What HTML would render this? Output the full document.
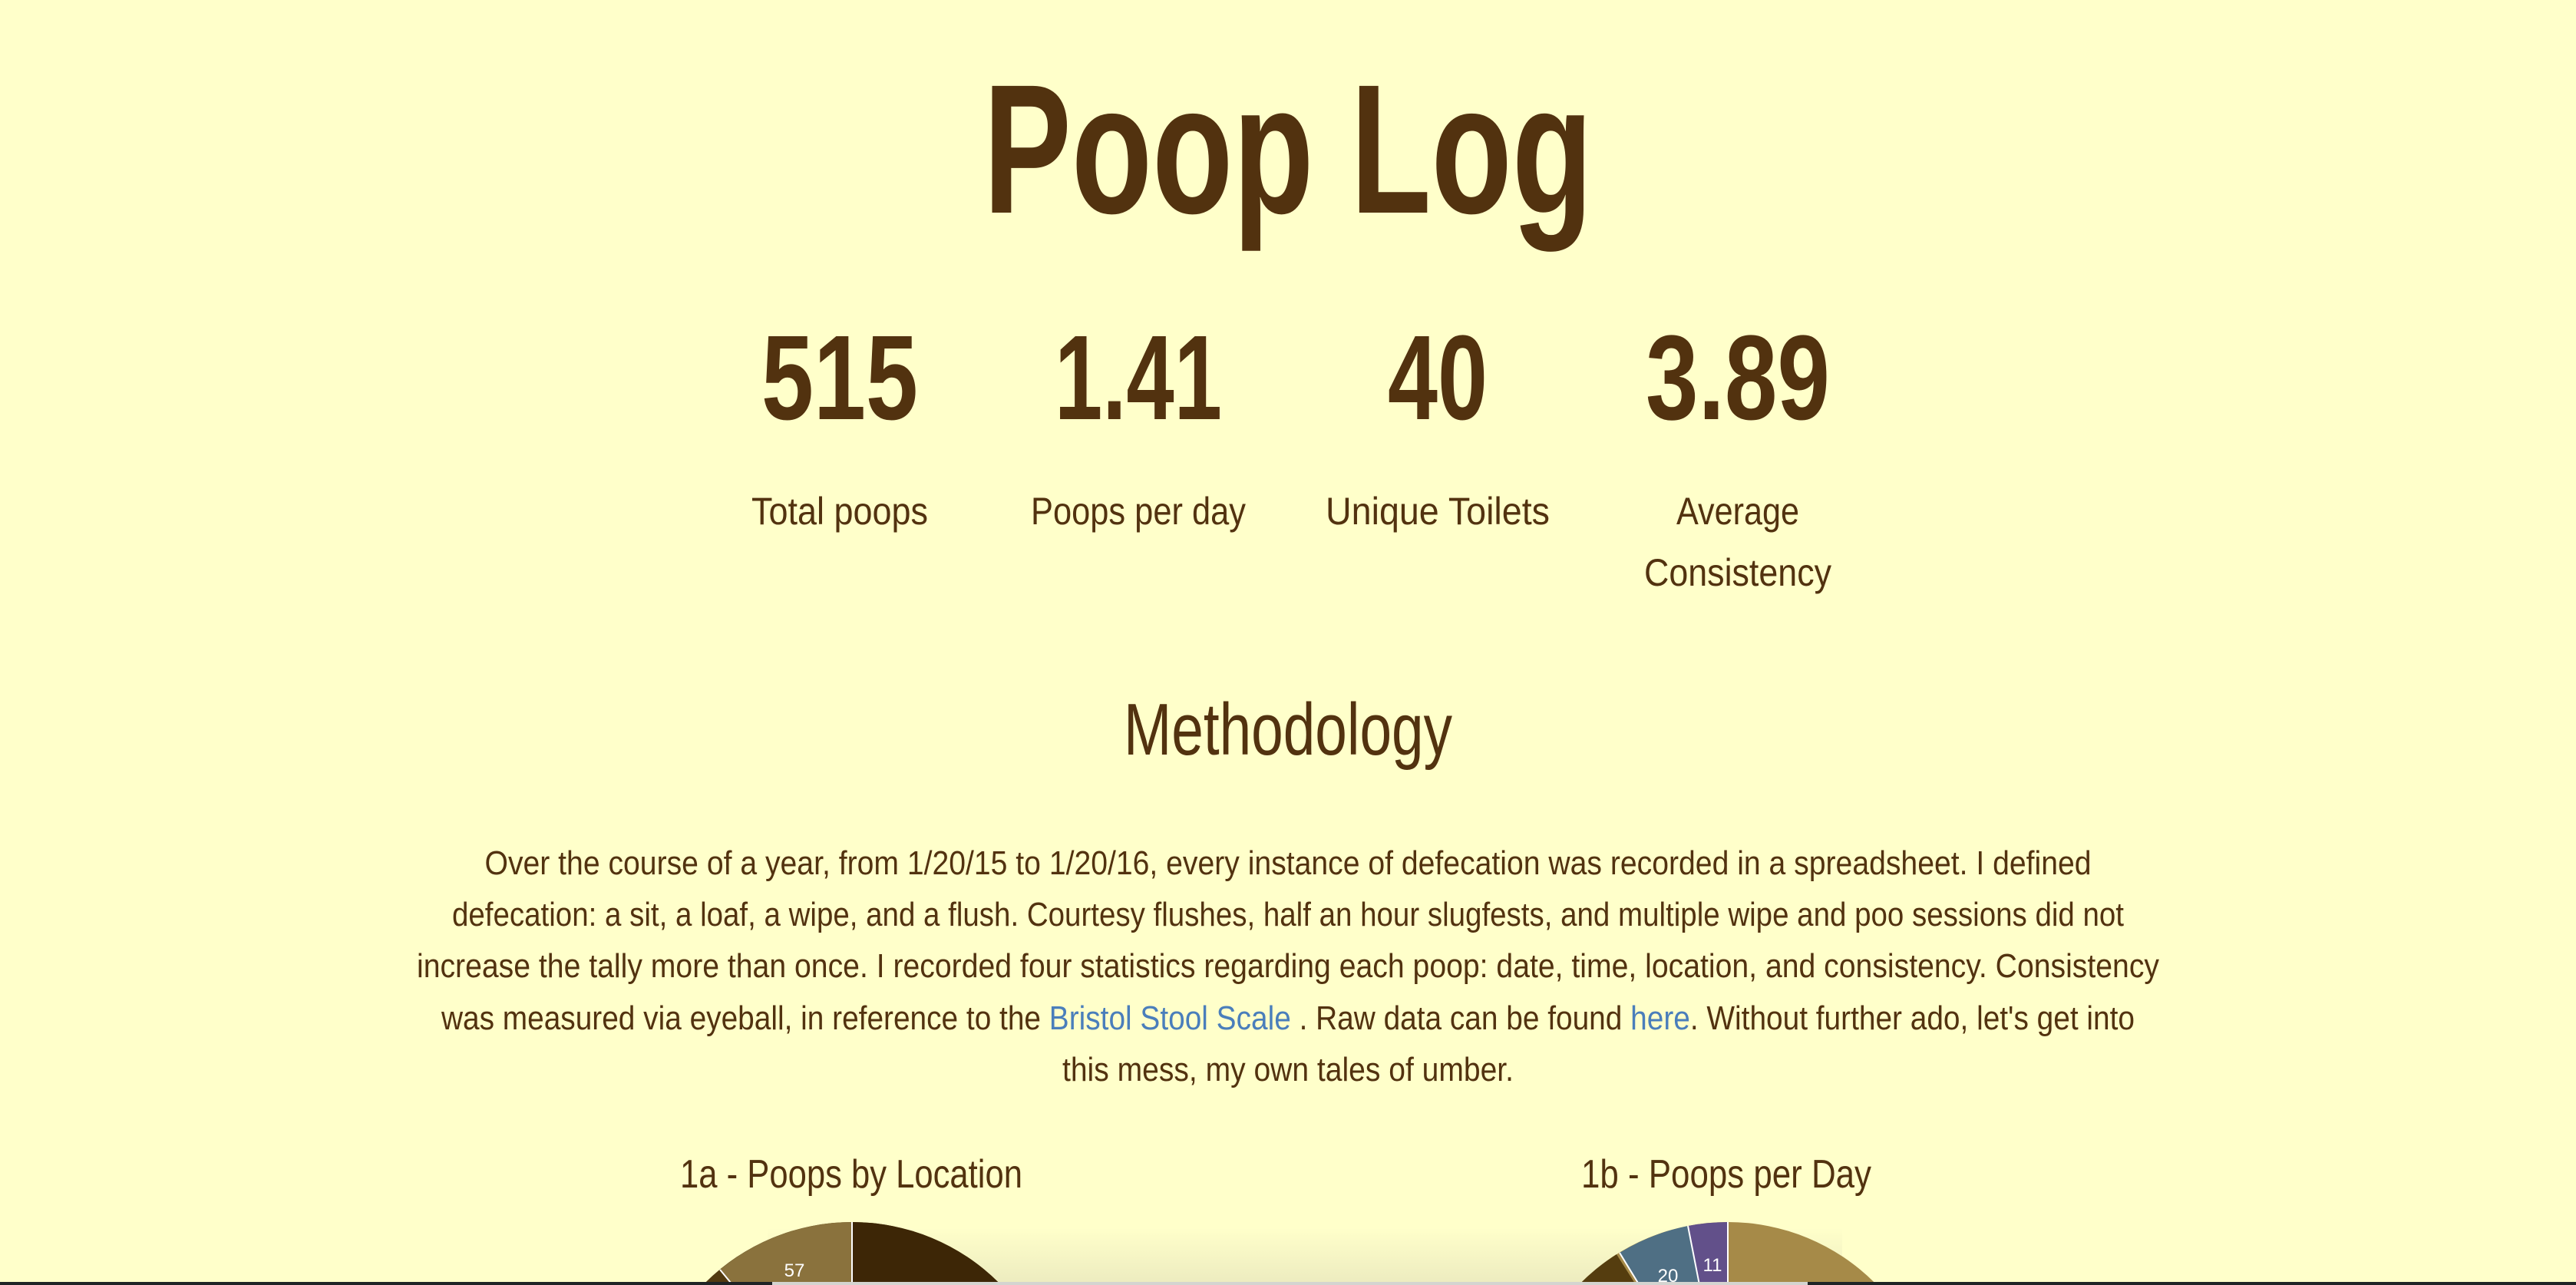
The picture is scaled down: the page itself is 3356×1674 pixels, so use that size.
<!DOCTYPE html>
<html><head><meta charset="utf-8">
<style>
html,body{margin:0;padding:0;overflow:hidden;width:3356px;height:1674px}
body{background:#ffffca;position:relative;color:#52320f;font-family:"Liberation Sans Narrow","Liberation Sans",sans-serif}
.t{position:absolute;white-space:nowrap;line-height:1;transform-origin:center top}
a{color:#4a7ebb;text-decoration:none}
</style></head><body>
<div style="position:absolute;left:1000px;top:1600px;width:1400px;height:74px;background:linear-gradient(#ffffca,#ecebbf)"></div>
<div class="t fit" style="--w:794;left:0;width:3356px;text-align:center;font-size:240px;font-weight:bold;top:74px">Poop Log</div>

<div class="t fit" style="--w:204;left:794px;width:600px;text-align:center;font-size:157px;font-weight:bold;top:414px">515</div>
<div class="t fit" style="--w:218;left:1183px;width:600px;text-align:center;font-size:157px;font-weight:bold;top:414px">1.41</div>
<div class="t fit" style="--w:130;left:1573px;width:600px;text-align:center;font-size:157px;font-weight:bold;top:414px">40</div>
<div class="t fit" style="--w:240;left:1964px;width:600px;text-align:center;font-size:157px;font-weight:bold;top:414px">3.89</div>

<div class="t fit" style="--w:230;left:794px;width:600px;text-align:center;font-size:50px;top:641px">Total poops</div>
<div class="t fit" style="--w:280;left:1183px;width:600px;text-align:center;font-size:50px;top:641px">Poops per day</div>
<div class="t fit" style="--w:292;left:1573px;width:600px;text-align:center;font-size:50px;top:641px">Unique Toilets</div>
<div class="t fit" style="--w:160;left:1964px;width:600px;text-align:center;font-size:50px;top:641px">Average</div>
<div class="t fit" style="--w:244;left:1964px;width:600px;text-align:center;font-size:50px;top:721px">Consistency</div>

<div class="t fit" style="--w:428;left:0;width:3356px;text-align:center;font-size:96px;top:903px">Methodology</div>

<div class="t fit" style="--w:2093;left:0;width:3356px;text-align:center;font-size:44px;top:1103px">Over the course of a year, from 1/20/15 to 1/20/16, every instance of defecation was recorded in a spreadsheet. I defined</div>
<div class="t fit" style="--w:2178;left:0;width:3356px;text-align:center;font-size:44px;top:1170px">defecation: a sit, a loaf, a wipe, and a flush. Courtesy flushes, half an hour slugfests, and multiple wipe and poo sessions did not</div>
<div class="t fit" style="--w:2270;left:0;width:3356px;text-align:center;font-size:44px;top:1237px">increase the tally more than once. I recorded four statistics regarding each poop: date, time, location, and consistency. Consistency</div>
<div class="t fit" style="--w:2206;left:0;width:3356px;text-align:center;font-size:44px;top:1305px">was measured via eyeball, in reference to the <a>Bristol Stool Scale</a> . Raw data can be found <a>here</a>. Without further ado, let's get into</div>
<div class="t fit" style="--w:588;left:0;width:3356px;text-align:center;font-size:44px;top:1372px">this mess, my own tales of umber.</div>

<div class="t fit" style="--w:446;left:809px;width:600px;text-align:center;font-size:52px;top:1504px">1a - Poops by Location</div>
<div class="t fit" style="--w:378;left:1949px;width:600px;text-align:center;font-size:52px;top:1504px">1b - Poops per Day</div>

<svg style="position:absolute;left:0;top:0" width="3356" height="1674">
 <g transform="translate(1110,1863)">
  <circle r="271" fill="#523a10"/>
  <path d="M0 0 L0 -271 A271 271 0 0 1 271 0 A271 271 0 0 1 0 271 Z" fill="#3d2606"/>
  <path d="M0 0 L-172 -209 A271 271 0 0 1 0 -271 Z" fill="#8a723d"/>
  <line x1="0" y1="0" x2="0" y2="-271" stroke="#fff" stroke-width="2"/>
  <line x1="0" y1="0" x2="-172" y2="-209" stroke="#fff" stroke-width="2"/>
  <text x="-75" y="-200" fill="#fff" font-family="Liberation Sans" font-size="24" text-anchor="middle">57</text>
 </g>
 <g transform="translate(2251,1863)">
  <circle r="271" fill="#a68a48"/>
  <path d="M0 0 L-145 -229 A271 271 0 0 0 -271 0 L0 0 Z" fill="#553d0f"/>
  <path d="M0 0 L-141 -231 A271 271 0 0 1 -52 -266 Z" fill="#4f6f84"/>
  <path d="M0 0 L-52 -266 A271 271 0 0 1 0 -271 Z" fill="#62508a"/>
  <line x1="0" y1="0" x2="0" y2="-271" stroke="#fff" stroke-width="2"/>
  <line x1="0" y1="0" x2="-52" y2="-266" stroke="#fff" stroke-width="2"/>
  <line x1="0" y1="0" x2="-141" y2="-231" stroke="#fff" stroke-width="2"/>
  <text x="-78" y="-193" fill="#fff" font-family="Liberation Sans" font-size="24" text-anchor="middle">20</text>
  <text x="-20" y="-207" fill="#fff" font-family="Liberation Sans" font-size="24" text-anchor="middle">11</text>
 </g>
</svg>
<div style="position:absolute;left:0;top:1670px;width:3356px;height:4px;background:#1f2426"></div>
<div style="position:absolute;left:1006px;top:1670px;width:1349px;height:4px;background:#d4d4d0"></div>
<script>
document.querySelectorAll('.fit').forEach(function(e){
 var w=parseFloat(getComputedStyle(e).getPropertyValue('--w'));
 var r=document.createRange();r.selectNodeContents(e);
 var a=r.getBoundingClientRect().width;
 if(a>0&&w>0){e.style.transform='scaleX('+(w/a)+')';}
});
</script>
</body></html>
